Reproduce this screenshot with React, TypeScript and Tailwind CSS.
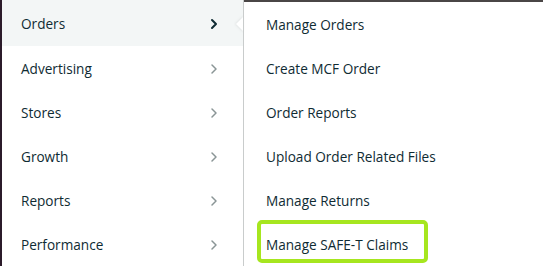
import React from "react";

const mainItems = ["Orders", "Advertising", "Stores", "Growth", "Reports", "Performance"];
const subItems = [
  "Manage Orders",
  "Create MCF Order",
  "Order Reports",
  "Upload Order Related Files",
  "Manage Returns",
  "Manage SAFE-T Claims",
];

function Chevron({ active }: { active: boolean }) {
  return (
    <svg width="10" height="12" viewBox="0 0 10 12" fill="none">
      <path
        d="M3 2 L7 6 L3 10"
        stroke={active ? "#0f2b33" : "#8a9596"}
        strokeWidth={active ? 2 : 1.5}
        strokeLinecap="round"
        strokeLinejoin="round"
      />
    </svg>
  );
}

export default function App() {
  return (
    <div
      className="flex w-[543px] h-[266px] overflow-hidden bg-white text-[13.6px] text-[#0f2b33]"
      style={{ fontFamily: '"Open Sans", "Noto Sans", sans-serif' }}
    >
      <div className="w-[2px] shrink-0 bg-[#2b1b2a]" />
      <div className="w-[241px] shrink-0 flex flex-col">
        {mainItems.map((item, i) => (
          <div
            key={item}
            className={`relative flex items-center justify-between pl-[19px] pr-[24px] shrink-0 ${
              i === 0 ? "bg-[#f3f6f6] h-[46px] pt-[2px]" : "h-[44px] pt-[2px]"
            }`}
          >
            <span>{item}</span>
            <Chevron active={i === 0} />
            {i === 0 && (
              <div className="absolute right-[-1px] top-[16px] w-0 h-0 border-y-[8px] border-y-transparent border-r-[8px] border-r-white drop-shadow-[-1px_0_1px_rgba(0,0,0,0.08)]" />
            )}
          </div>
        ))}
      </div>
      <div className="relative flex-1 flex flex-col border-l border-[#c9cccc]">
        <div className="absolute top-0 left-0 right-0 h-[2px] bg-[#4a4646]" />
        <div className="flex flex-col pt-[2px]">
          {subItems.map((item, i) => (
            <div key={item} className="relative flex items-center h-[44px] pl-[22px] pt-[2px] shrink-0">
              <span>{item}</span>
              {i === 5 && (
                <div className="absolute left-[13px] top-[-2px] w-[171px] h-[43px] border-[4px] border-[#a6e61f] rounded-[5px]" />
              )}
            </div>
          ))}
        </div>
      </div>
    </div>
  );
}
